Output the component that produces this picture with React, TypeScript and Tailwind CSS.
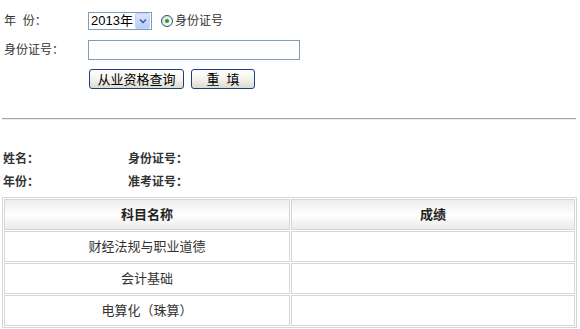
import React from 'react';

const cjk = { fontFamily: '"Liberation Sans", "Noto Sans CJK SC", sans-serif' };

const subjects = ['财经法规与职业道德', '会计基础', '电算化（珠算）'];

function XpButton({ children, className }: { children: React.ReactNode; className: string }) {
  return (
    <button
      className={`h-[20px] rounded-[3px] border border-[#1c3f7a] bg-gradient-to-b from-white via-[#f4f3ee] to-[#dcdad0] text-[13px] leading-none text-black ${className}`}
    >
      {children}
    </button>
  );
}

export default function App() {
  return (
    <div className="w-[580px] h-[329px] bg-white text-[#333] overflow-hidden" style={cjk}>
      {/* query form */}
      <div className="pt-[12px] pl-[4px] flex flex-col">
        <div className="flex items-center h-[18px] text-[12px]">
          <span className="w-[84px]">年&nbsp;&nbsp;份：</span>
          <div className="flex items-center h-[18px] w-[64px] border border-[#7f9db9] bg-white">
            <span className="flex-1 pl-[2px] text-[13px] text-black">2013年</span>
            <span className="w-[15px] h-[16px] mr-[1px] rounded-[2px] bg-gradient-to-b from-[#dbe6fd] to-[#b7cdf8] border border-[#c3d3fd] flex items-center justify-center">
              <svg width="8" height="6" viewBox="0 0 8 6">
                <path d="M1 1.5 L4 4.5 L7 1.5" fill="none" stroke="#4d6185" strokeWidth="1.6" />
              </svg>
            </span>
          </div>
          <span className="ml-[9px] w-[12px] h-[12px] rounded-full border border-[#1c5180] bg-gradient-to-br from-[#dcdcd5] to-white flex items-center justify-center">
            <span className="w-[4px] h-[4px] rounded-full bg-[#21a121]" />
          </span>
          <span className="ml-[2px]">身份证号</span>
        </div>
        <div className="flex items-center mt-[10px] h-[20px] text-[12px]">
          <span className="w-[84px]">身份证号：</span>
          <input className="w-[212px] h-[20px] border border-[#7f9db9] bg-white outline-none" />
        </div>
        <div className="flex items-center mt-[9px] pl-[85px] gap-[7px]">
          <XpButton className="w-[95px]">从业资格查询</XpButton>
          <XpButton className="w-[64px]">重&nbsp;&nbsp;填</XpButton>
        </div>
      </div>

      <div className="mt-[29px] ml-[2px] w-[574px] h-[2px] border-t border-[#a9a99c] border-b border-b-[#ecece6]" />

      {/* result info */}
      <div className="mt-[31px] pl-[3px] text-[12px] font-bold text-[#333] flex flex-col gap-[8px]">
        <div className="flex h-[15px] items-center">
          <span className="w-[125px]">姓名：</span>
          <span>身份证号：</span>
        </div>
        <div className="flex h-[15px] items-center">
          <span className="w-[125px]">年份：</span>
          <span>准考证号：</span>
        </div>
      </div>

      <table className="mt-[8px] ml-[2px] w-[575px] border-separate border-spacing-[1px] border border-[#d6d6d6] text-[13px]">
        <thead>
          <tr>
            <th className="h-[31px] w-[286px] border border-[#d6d6d6] bg-gradient-to-b from-[#ececec] via-white to-[#ebebeb] font-bold text-[#222]">
              科目名称
            </th>
            <th className="h-[31px] border border-[#d6d6d6] bg-gradient-to-b from-[#ececec] via-white to-[#ebebeb] font-bold text-[#222]">
              成绩
            </th>
          </tr>
        </thead>
        <tbody>
          {subjects.map((s) => (
            <tr key={s}>
              <td className="h-[31px] border border-[#d6d6d6] text-center text-[#333]">{s}</td>
              <td className="h-[31px] border border-[#d6d6d6]" />
            </tr>
          ))}
        </tbody>
      </table>
    </div>
  );
}
